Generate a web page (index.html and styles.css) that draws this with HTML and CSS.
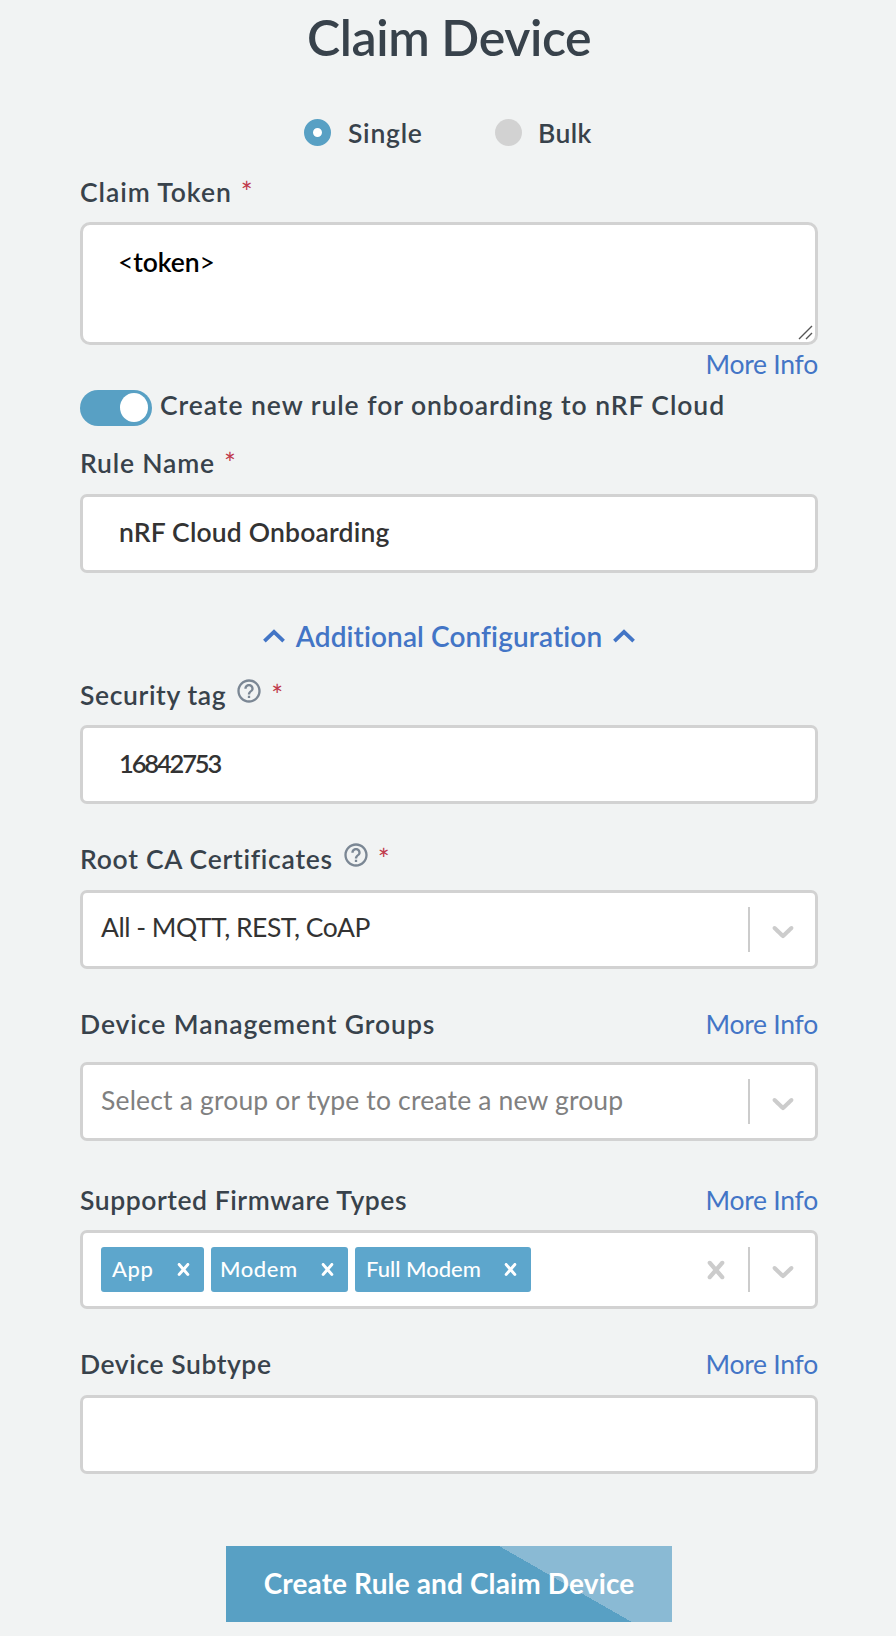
FILE: index.html
```html
<!DOCTYPE html>
<html lang="en">
<head>
<meta charset="utf-8">
<title>Claim Device</title>
<link rel="stylesheet" href="styles.css">
</head>
<body>
<svg class="defs" width="0" height="0" aria-hidden="true">
  <symbol id="help" viewBox="0 0 24 24"><path fill="currentColor" d="M11 18h2v-2h-2v2zm1-16C6.48 2 2 6.48 2 12s4.480 10 10 10 10-4.480 10-10S17.520 2 12 2zm0 18c-4.410 0-8-3.590-8-8s3.590-8 8-8 8 3.590 8 8-3.590 8-8 8zm0-14c-2.210 0-4 1.790-4 4h2c0-1.100.9-2 2-2s2 .9 2 2c0 2-3 1.750-3 5h2c0-2.250 3-2.500 3-5 0-2.210-1.790-4-4-4z"/></symbol>
  <symbol id="down" viewBox="0 0 20 20"><path fill="currentColor" d="M4.516 7.548c0.436-0.446 1.043-0.481 1.576 0l3.908 3.747 3.908-3.747c0.533-0.481 1.141-0.446 1.574 0 0.436 0.445 0.408 1.197 0 1.615-0.406 0.418-4.695 4.502-4.695 4.502-0.217 0.223-0.502 0.335-0.787 0.335s-0.570-0.112-0.789-0.335c0 0-4.287-4.084-4.695-4.502s-0.436-1.170 0-1.615z"/></symbol>
  <symbol id="cross" viewBox="0 0 20 20"><path fill="currentColor" d="M14.348 14.849c-0.469 0.469-1.229 0.469-1.697 0l-2.651-3.030-2.651 3.029c-0.469 0.469-1.229 0.469-1.697 0-0.469-0.469-0.469-1.229 0-1.697l2.758-3.150-2.759-3.152c-0.469-0.469-0.469-1.228 0-1.697s1.228-0.469 1.697 0l2.652 3.031 2.651-3.031c0.469-0.469 1.228-0.469 1.697 0s0.469 1.229 0 1.697l-2.758 3.152 2.758 3.150c0.469 0.469 0.469 1.229 0 1.698z"/></symbol>
  <symbol id="up" viewBox="0 0 22 14"><path fill="none" stroke="currentColor" stroke-width="3.800" d="M1.400 12.200 11 3l9.600 9.200"/></symbol>
</svg>
<main class="form">
  <h1 class="title">Claim Device</h1>

  <div class="modes">
    <label class="mode"><span class="radio radio-on"></span><span class="single">Single</span></label>
    <label class="mode"><span class="radio"></span><span class="bulk">Bulk</span></label>
  </div>

  <div class="head head-token"><label class="label wide">Claim Token</label><span class="req">*</span></div>
  <div class="box token" role="textbox"><span class="angle">&lt;</span>token<span class="angle">&gt;</span>
    <svg class="grip" viewBox="0 0 15 15" width="15" height="15"><path d="M1 14 14 1M8 14l6-6" fill="none" stroke="#555" stroke-width="1.400"/></svg>
  </div>
  <div class="info-row"><a class="more">More Info</a></div>

  <div class="rule">
    <span class="toggle"><span class="knob"></span></span>
    <span class="rule-label">Create new rule for onboarding to nRF Cloud</span>
  </div>

  <div class="head head-name"><label class="label name">Rule Name</label><span class="req">*</span></div>
  <input class="box field" value="nRF Cloud Onboarding">

  <div class="additional">
    <svg width="22" height="14"><use href="#up"/></svg>
    <span>Additional Configuration</span>
    <svg width="22" height="14"><use href="#up"/></svg>
  </div>

  <div class="head head-tag"><label class="label tag">Security tag</label><svg class="help" width="28" height="28"><use href="#help"/></svg><span class="req">*</span></div>
  <input class="box field digits" value="16842753">

  <div class="head head-cert"><label class="label cert">Root CA Certificates</label><svg class="help" width="28" height="28"><use href="#help"/></svg><span class="req">*</span></div>
  <div class="box select">
    <span class="value">All - MQTT, REST, CoAP</span>
    <span class="bar"></span>
    <svg class="arrow" width="36" height="36"><use href="#down"/></svg>
  </div>

  <div class="head head-groups"><label class="label wide">Device Management Groups</label><a class="more">More Info</a></div>
  <div class="box select">
    <span class="placeholder">Select a group or type to create a new group</span>
    <span class="bar"></span>
    <svg class="arrow" width="36" height="36"><use href="#down"/></svg>
  </div>

  <div class="head head-types"><label class="label narrow">Supported Firmware Types</label><a class="more">More Info</a></div>
  <div class="box select">
    <div class="chips">
      <span class="chip app"><span>App</span><svg width="25" height="25"><use href="#cross"/></svg></span>
      <span class="chip modem"><span>Modem</span><svg width="25" height="25"><use href="#cross"/></svg></span>
      <span class="chip full"><span>Full Modem</span><svg width="25" height="25"><use href="#cross"/></svg></span>
    </div>
    <svg class="clear" width="36" height="36"><use href="#cross"/></svg>
    <span class="bar"></span>
    <svg class="arrow" width="36" height="36"><use href="#down"/></svg>
  </div>

  <div class="head head-subtype"><label class="label narrow">Device Subtype</label><a class="more">More Info</a></div>
  <input class="box field" value="">

  <button class="submit">Create Rule and Claim Device</button>
</main>
</body>
</html>
```
FILE: styles.css
```css
* { box-sizing: border-box; }

body {
  margin: 0;
  background: #f1f3f3;
  color: #38424b;
  font-family: Lato, "Open Sans", sans-serif;
  font-size: 26.5px;
  line-height: 34px;
}

.defs { position: absolute; }
svg { display: block; flex: none; }

.form {
  display: flex;
  flex-direction: column;
  width: 738px;
  height: 1636px;
  margin-left: 80px;
  white-space: nowrap;
}

.title {
  margin: 7px 0 0;
  padding-left: 227px;
  font-size: 50px;
  font-weight: 600;
  line-height: 60px;
  letter-spacing: -0.41px;
}

/* Single / bulk switch */
.modes { display: flex; height: 32px; flex: none; margin-top: 49px; padding-left: 224px; font-weight: 600; }
.mode { display: flex; align-items: center; width: 191px; }
.radio { width: 27px; height: 27px; margin-right: 17px; border-radius: 50%; background: #d2d2d2; }
.radio-on { border: 9px solid #58a0c4; background: #fff; }
.single { margin-top: 2px; letter-spacing: 0.75px; }
.bulk { margin: 2px 0 0 -1px; letter-spacing: 0.39px; }

/* Label rows */
.head { display: flex; height: 32px; flex: none; }
.head + .box { margin-top: 16px; }
.label { font-weight: 600; }
.wide { letter-spacing: 0.93px; }
.name { letter-spacing: 0.81px; }
.tag { letter-spacing: 0.62px; }
.narrow { letter-spacing: 0.56px; }
.cert { letter-spacing: 0.73px; }
.req { margin-left: 9px; color: #c0394b; font-size: 28px; }
.help { margin: -1px 0 0 9px; color: #7b8794; }
.help + .req { margin-left: 8px; }
.head-token { margin-top: 27px; }
.head-name { margin-top: 20px; }
.head-tag { margin-top: 25px; }
.head-cert { margin-top: 38px; }
.head-groups { margin-top: 38px; }
.head-types { margin-top: 42px; }
.head-subtype { margin-top: 38px; }
.more { margin-left: auto; color: #4375c6; letter-spacing: -0.25px; }

/* Fields */
.box {
  width: 738px;
  height: 79px;
  flex: none;
  border: 3px solid #d2d2d2;
  border-radius: 7px;
  background: #fff;
}
.field {
  margin: 0;
  padding: 0 36px 3px;
  color: #333;
  font: 600 26.5px/32px Lato, sans-serif;
  letter-spacing: 0.18px;
  outline: none;
}
.head-tag + .field, .head-types + .select, .head-token + .token { margin-top: 15px; }
.head-groups + .select { margin-top: 23px; }
.digits { font-size: 25.5px; letter-spacing: -2.15px; }

.token {
  position: relative;
  height: 123px;
  padding: 20px 35px;
  border-radius: 10px;
  color: #000;
  font-weight: 600;
  letter-spacing: -0.1px;
}
.angle { font-weight: 400; }
.grip { position: absolute; right: 2px; bottom: 2px; }

.info-row { display: flex; height: 32px; flex: none; margin-top: 2px; }

.rule { display: flex; height: 36px; flex: none; margin-top: 11px; }
.toggle { display: flex; justify-content: flex-end; width: 72px; height: 36px; padding: 3px 4px; border-radius: 18px; background: #58a0c4; }
.knob { width: 28px; height: 29px; border-radius: 50%; background: #fff; }
.rule-label { margin: -2px 0 0 8px; font-weight: 600; letter-spacing: 0.95px; }

.additional {
  display: flex;
  align-items: center;
  justify-content: center;
  gap: 11px;
  height: 34px;
  flex: none;
  margin-top: 46px;
  color: #4375c6;
  font-size: 28px;
  font-weight: 600;
  letter-spacing: 0.1px;
}

/* Select boxes */
.select { display: flex; align-items: center; padding: 0 14px 0 18px; color: #333; }
.value { margin-bottom: 6px; letter-spacing: -0.5px; }
.placeholder { margin-bottom: 4px; color: #808080; letter-spacing: 0.17px; }
.bar { width: 2px; height: 45px; margin-left: auto; background: #ccc; }
.arrow { margin: 2px 0 0 15px; color: #ccc; }
.clear { margin-left: auto; color: #ccc; }
.clear + .bar { margin-left: 14px; }

.chips { display: flex; gap: 7px; }
.chip {
  display: flex;
  align-items: center;
  justify-content: space-between;
  height: 45px;
  padding: 0 8px 0 11px;
  border-radius: 3px;
  background: #5da6cc;
  color: #fff;
  font-size: 22px;
  font-weight: 500;
}
.chip span { margin-bottom: 1px; }
.app { width: 103px; letter-spacing: 0.6px; }
.modem { width: 137px; padding-left: 9px; letter-spacing: 0.57px; }
.full { width: 176px; }

.submit {
  width: 446px;
  height: 76px;
  flex: none;
  margin: 72px 0 0 146px;
  padding: 0 0 3px;
  border: 0;
  background: linear-gradient(29.8deg, #58a0c4 70.1%, #8abad4 70.1%);
  color: #fff;
  font: 700 28px/34px Lato, sans-serif;
  letter-spacing: 0.13px;
}
```
